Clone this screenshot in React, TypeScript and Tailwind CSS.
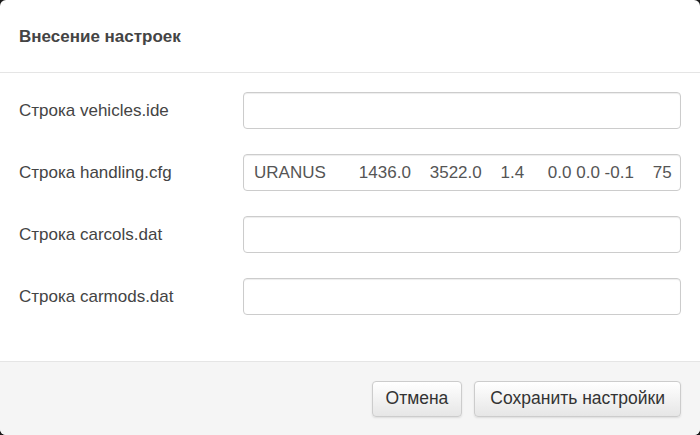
import React from "react";

const rows = [
  { label: "Строка vehicles.ide", value: "" },
  { label: "Строка handling.cfg", value: "URANUS       1436.0    3522.0    1.4     0.0 0.0 -0.1    75" },
  { label: "Строка carcols.dat", value: "" },
  { label: "Строка carmods.dat", value: "" },
];

export default function App() {
  return (
    <div className="w-[700px] h-[435px] bg-[#1a1a1a]" style={{ fontFamily: '"Liberation Sans", Arial, sans-serif' }}>
      <div className="w-full h-full bg-white rounded-[6px] overflow-hidden flex flex-col">
        <div className="h-[73px] border-b border-[#e5e5e5] flex items-center px-[19px] pt-[2px]">
          <h3 className="text-[17px] font-bold text-[#444]">Внесение настроек</h3>
        </div>
        <div className="flex-1 flex flex-col gap-[25px] pt-[19px] px-[19px]">
          {rows.map((r) => (
            <div key={r.label} className="flex items-center">
              <label className="w-[224px] text-[17px] text-[#444] pt-[1px]">{r.label}</label>
              <input
                readOnly
                value={r.value}
                className="w-[438px] h-[37px] border border-[#ccc] rounded-[4px] pl-[10px] pr-[2px] text-[17px] text-[#555] bg-white shadow-[inset_0_1px_1px_rgba(0,0,0,0.075)] outline-none whitespace-pre"
                style={{ fontFamily: '"Liberation Sans", Arial, sans-serif' }}
              />
            </div>
          ))}
        </div>
        <div className="h-[74px] border-t border-[#e5e5e5] bg-[#f5f5f5] flex items-center justify-end gap-[12px] px-[19px]">
          <button className="h-[36px] px-[13px] border border-[#ccc] rounded-[4px] bg-gradient-to-b from-white to-[#e6e6e6] text-[17.5px] text-[#333] shadow-[0_1px_2px_rgba(0,0,0,0.1)]">Отмена</button>
          <button className="h-[36px] px-[15px] border border-[#ccc] rounded-[4px] bg-gradient-to-b from-white to-[#e6e6e6] text-[17.5px] text-[#333] shadow-[0_1px_2px_rgba(0,0,0,0.1)]">Сохранить настройки</button>
        </div>
      </div>
    </div>
  );
}
